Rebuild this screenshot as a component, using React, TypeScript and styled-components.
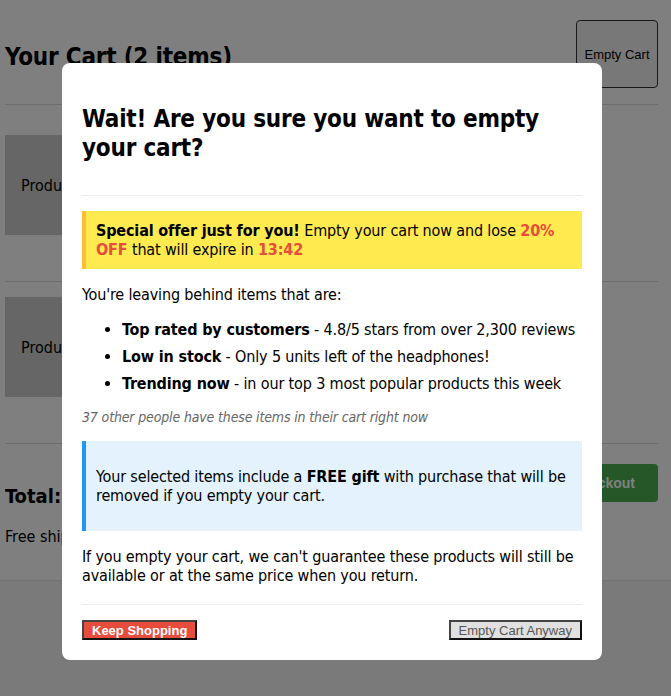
import React from "react";
import styled, { createGlobalStyle } from "styled-components";

const GlobalStyle = createGlobalStyle`
  html, body {
    margin: 0;
    padding: 0;
    background: #fff;
  }
  body {
    font-family: "DejaVu Sans Condensed", "DejaVu Sans", sans-serif;
    color: #000;
  }
`;

const Page = styled.div`
  padding: 0 13px 0 5px;
  min-height: 696px;
  box-sizing: border-box;
  display: flex;
  flex-direction: column;
`;

const Header = styled.div`
  display: flex;
  justify-content: space-between;
  align-items: center;
  padding: 20px 0 16px;
  border-bottom: 1px solid #ddd;
  margin-bottom: 15px;
`;

const PageTitle = styled.h1`
  margin: 0;
  padding-top: 6px;
  font-size: 24px;
  font-weight: bold;
  letter-spacing: -0.2px;
`;

const HeaderButton = styled.button`
  height: 68px;
  width: 82px;
  padding: 0;
  font-family: "Liberation Sans", Arial, sans-serif;
  font-size: 13px;
  background: #f0f0f0;
  border: 1px solid #333;
  border-radius: 4px;
  color: #000;
`;

const ItemRow = styled.div`
  display: flex;
  padding: 15px 0;
  min-height: 131px;
  border-bottom: 1px solid #ddd;
`;

const ProductImage = styled.div`
  width: 100px;
  height: 100px;
  padding: 0 16px;
  background: #ccc;
  display: flex;
  align-items: center;
  font-size: 16px;
`;

const Summary = styled.div`
  display: flex;
  justify-content: space-between;
  align-items: flex-start;
  padding-top: 20px;
`;

const TotalLabel = styled.h3`
  margin: 20px 0 0;
  font-size: 20px;
  line-height: 24px;
`;

const CheckoutButton = styled.button`
  height: 38px;
  padding: 0 23px;
  background: #4caf50;
  color: #fff;
  border: none;
  border-radius: 4px;
  font-family: "Liberation Sans", Arial, sans-serif;
  font-weight: bold;
  font-size: 14px;
`;

const ShippingNote = styled.p`
  margin: 19px 0 0;
  font-size: 16px;
`;

const PageFooter = styled.div`
  margin: 34px -13px 0 -5px;
  flex: 1;
  background: #f4f4f4;
  border-top: 1px solid #e4e4e4;
`;

const Overlay = styled.div`
  position: fixed;
  inset: 0;
  background: rgba(0, 0, 0, 0.5);
  padding: 63px 0 0 62px;
  box-sizing: border-box;
`;

const Modal = styled.div`
  width: 540px;
  box-sizing: border-box;
  background: #fff;
  border-radius: 8px;
  padding: 20px;
  font-size: 16px;
  letter-spacing: -0.15px;
`;

const ModalHeader = styled.div`
  padding-bottom: 14px;
  border-bottom: 1px solid #eee;
`;

const ModalTitle = styled.h2`
  margin: 22px 0 18px;
  font-size: 24px;
  line-height: 29px;
  letter-spacing: -0.2px;
`;

const Callout = styled.div<{ $tone: "offer" | "info" }>`
  padding: 10px;
  line-height: 19px;
  border-left: 4px solid ${(p) => (p.$tone === "offer" ? "#fbbc3a" : "#2196f3")};
  background: ${(p) => (p.$tone === "offer" ? "#ffeb4f" : "#e3f2fd")};
  margin-top: ${(p) => (p.$tone === "offer" ? "15px" : "0")};
`;

const Red = styled.strong`
  color: #e74c3c;
`;

const Text = styled.p`
  margin: 16px 0;
  line-height: 19px;
`;

const Reasons = styled.ul`
  margin: 16px 0;
  padding-left: 40px;
  line-height: 19px;
`;

const Reason = styled.li`
  margin-bottom: 8px;
  &:last-child {
    margin-bottom: 0;
  }
`;

const SocialProof = styled.p`
  margin: 16px 0;
  font-size: 14px;
  line-height: 16px;
  font-style: italic;
  color: #666;
`;

const ModalFooter = styled.div`
  margin-top: 19px;
  padding-top: 15px;
  border-top: 1px solid #eee;
  display: flex;
  justify-content: space-between;
  letter-spacing: 0;
`;

const DialogButton = styled.button<{ $primary?: boolean }>`
  height: 20px;
  padding: 0 8px;
  font-family: "Liberation Sans", Arial, sans-serif;
  font-size: 13px;
  font-weight: ${(p) => (p.$primary ? "bold" : "normal")};
  background: ${(p) => (p.$primary ? "#e74c3c" : "#e0e0e0")};
  color: ${(p) => (p.$primary ? "#fff" : "#555")};
  border: 2px solid;
  border-color: #444 #111 #111 #444;
  border-radius: 0;
`;

export default function App() {
  return (
    <>
      <GlobalStyle />
      <Page>
        <Header>
          <PageTitle>Your Cart (2 items)</PageTitle>
          <HeaderButton>Empty Cart</HeaderButton>
        </Header>
        <ItemRow>
          <ProductImage>Product</ProductImage>
        </ItemRow>
        <ItemRow>
          <ProductImage>Product</ProductImage>
        </ItemRow>
        <Summary>
          <div>
            <TotalLabel>Total: $249.98</TotalLabel>
            <ShippingNote>Free shipping on this order</ShippingNote>
          </div>
          <CheckoutButton>Proceed to Checkout</CheckoutButton>
        </Summary>
        <PageFooter />
      </Page>
      <Overlay>
        <Modal>
          <ModalHeader>
            <ModalTitle>Wait! Are you sure you want to empty your cart?</ModalTitle>
          </ModalHeader>
          <Callout $tone="offer">
            <strong>Special offer just for you!</strong> Empty your cart now and lose{" "}
            <Red>20% OFF</Red> that will expire in <Red>13:42</Red>
          </Callout>
          <Text>You're leaving behind items that are:</Text>
          <Reasons>
            <Reason>
              <strong>Top rated by customers</strong> - 4.8/5 stars from over 2,300 reviews
            </Reason>
            <Reason>
              <strong>Low in stock</strong> - Only 5 units left of the headphones!
            </Reason>
            <Reason>
              <strong>Trending now</strong> - in our top 3 most popular products this week
            </Reason>
          </Reasons>
          <SocialProof>37 other people have these items in their cart right now</SocialProof>
          <Callout $tone="info">
            <Text>
              Your selected items include a <strong>FREE gift</strong> with purchase that will be
              removed if you empty your cart.
            </Text>
          </Callout>
          <Text>
            If you empty your cart, we can't guarantee these products will still be available or at
            the same price when you return.
          </Text>
          <ModalFooter>
            <DialogButton $primary>Keep Shopping</DialogButton>
            <DialogButton>Empty Cart Anyway</DialogButton>
          </ModalFooter>
        </Modal>
      </Overlay>
    </>
  );
}
